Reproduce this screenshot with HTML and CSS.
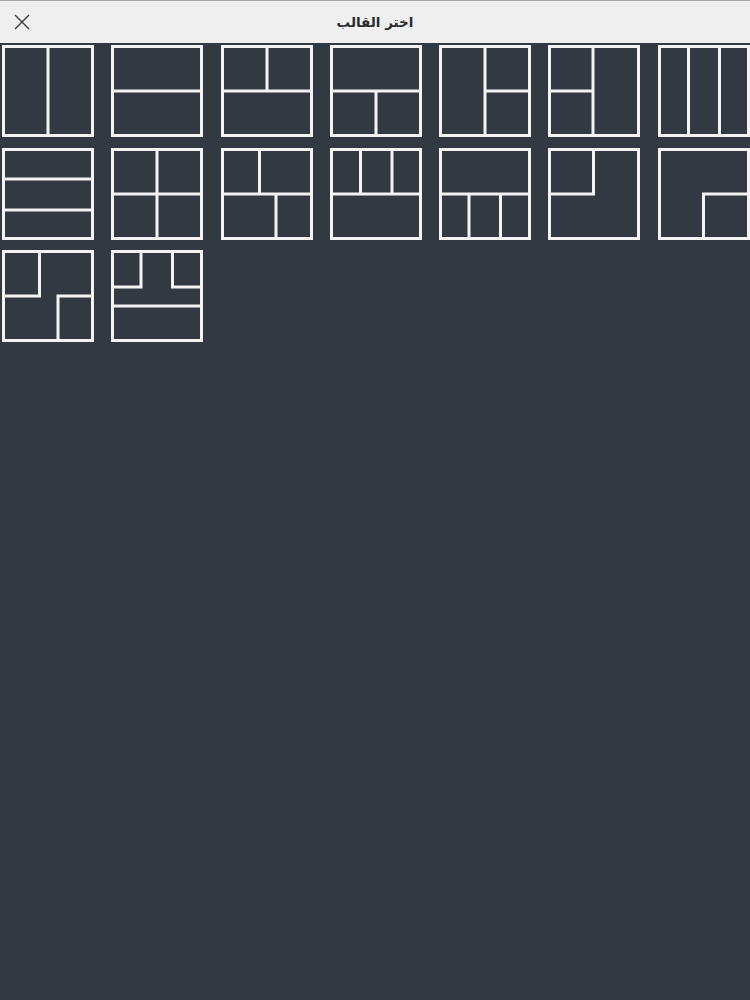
FILE: index.html
```html
<!DOCTYPE html>
<html lang="ar">
<head>
<meta charset="utf-8">
<title>اختر القالب</title>
<link rel="stylesheet" href="styles.css">
</head>
<body>
<header class="bar">
  <button class="close" aria-label="close">
    <svg viewBox="0 0 16 16" width="16" height="16"><path d="M1 1 L15 15 M15 1 L1 15"/></svg>
  </button>
  <h1 class="title" dir="rtl">اختر القالب</h1>
</header>
<main class="grid">
  <svg class="tile" viewBox="0 0 92 92"><rect x="1.5" y="1.5" width="89" height="89"/><path d="M46 3V89"/></svg>
  <svg class="tile" viewBox="0 0 92 92"><rect x="1.5" y="1.5" width="89" height="89"/><path d="M3 46H89"/></svg>
  <svg class="tile" viewBox="0 0 92 92"><rect x="1.5" y="1.5" width="89" height="89"/><path d="M3 46H89M46 3V46"/></svg>
  <svg class="tile" viewBox="0 0 92 92"><rect x="1.5" y="1.5" width="89" height="89"/><path d="M3 46H89M46 46V89"/></svg>
  <svg class="tile" viewBox="0 0 92 92"><rect x="1.5" y="1.5" width="89" height="89"/><path d="M46 3V89M46 46H89"/></svg>
  <svg class="tile" viewBox="0 0 92 92"><rect x="1.5" y="1.5" width="89" height="89"/><path d="M45 3V89M3 46H45"/></svg>
  <svg class="tile" viewBox="0 0 92 92"><rect x="1.5" y="1.5" width="89" height="89"/><path d="M30.5 3V89M61.5 3V89"/></svg>

  <svg class="tile" viewBox="0 0 92 92"><rect x="1.5" y="1.5" width="89" height="89"/><path d="M3 31H89M3 62H89"/></svg>
  <svg class="tile" viewBox="0 0 92 92"><rect x="1.5" y="1.5" width="89" height="89"/><path d="M3 46H89M46 3V89"/></svg>
  <svg class="tile" viewBox="0 0 92 92"><rect x="1.5" y="1.5" width="89" height="89"/><path d="M3 46H89M38.5 3V46M55 46V89"/></svg>
  <svg class="tile" viewBox="0 0 92 92"><rect x="1.5" y="1.5" width="89" height="89"/><path d="M3 46H89M30.5 3V46M62 3V46"/></svg>
  <svg class="tile" viewBox="0 0 92 92"><rect x="1.5" y="1.5" width="89" height="89"/><path d="M3 46H89M30 46V89M61.5 46V89"/></svg>
  <svg class="tile" viewBox="0 0 92 92"><rect x="1.5" y="1.5" width="89" height="89"/><path d="M45.5 3V47.5M3 46H47"/></svg>
  <svg class="tile" viewBox="0 0 92 92"><rect x="1.5" y="1.5" width="89" height="89"/><path d="M45.5 44.5V89M44 46H89"/></svg>

  <svg class="tile" viewBox="0 0 92 92"><rect x="1.5" y="1.5" width="89" height="89"/><path d="M37.5 3V47.5M3 46H39M56 44.5V89M54.5 46H89"/></svg>
  <svg class="tile" viewBox="0 0 92 92"><rect x="1.5" y="1.5" width="89" height="89"/><path d="M30 3V38.5M3 37H31.5M61.5 3V38.5M60 37H89M3 56H89"/></svg>
</main>
</body>
</html>
```

FILE: styles.css
```css
html, body {
  margin: 0;
  padding: 0;
}
body {
  background: #333942;
  min-height: 1000px;
  font-family: "DejaVu Sans", "Noto Sans", sans-serif;
}
.bar {
  height: 42px;
  background: #efeff0;
  border-top: 1px solid #a8a8aa;
  display: flex;
  align-items: center;
  justify-content: center;
  position: relative;
}
.title {
  margin: 0;
  font-size: 13.5px;
  font-weight: bold;
  color: #2c2c2e;
}
.close {
  position: absolute;
  left: 13px;
  top: 12px;
  width: 18px;
  height: 18px;
  padding: 0;
  border: 0;
  background: none;
  display: flex;
  align-items: center;
  justify-content: center;
}
.close svg path {
  stroke: #3a3a3c;
  stroke-width: 1.4;
  fill: none;
}
.grid {
  display: grid;
  grid-template-columns: repeat(7, 92px);
  column-gap: 17.3px;
  row-gap: 10.5px;
  padding: 2px 0 0 2px;
}
.tile {
  width: 92px;
  height: 92px;
  display: block;
}
.tile rect,
.tile path {
  fill: none;
  stroke: #f3f3f3;
  stroke-width: 3;
}
```
